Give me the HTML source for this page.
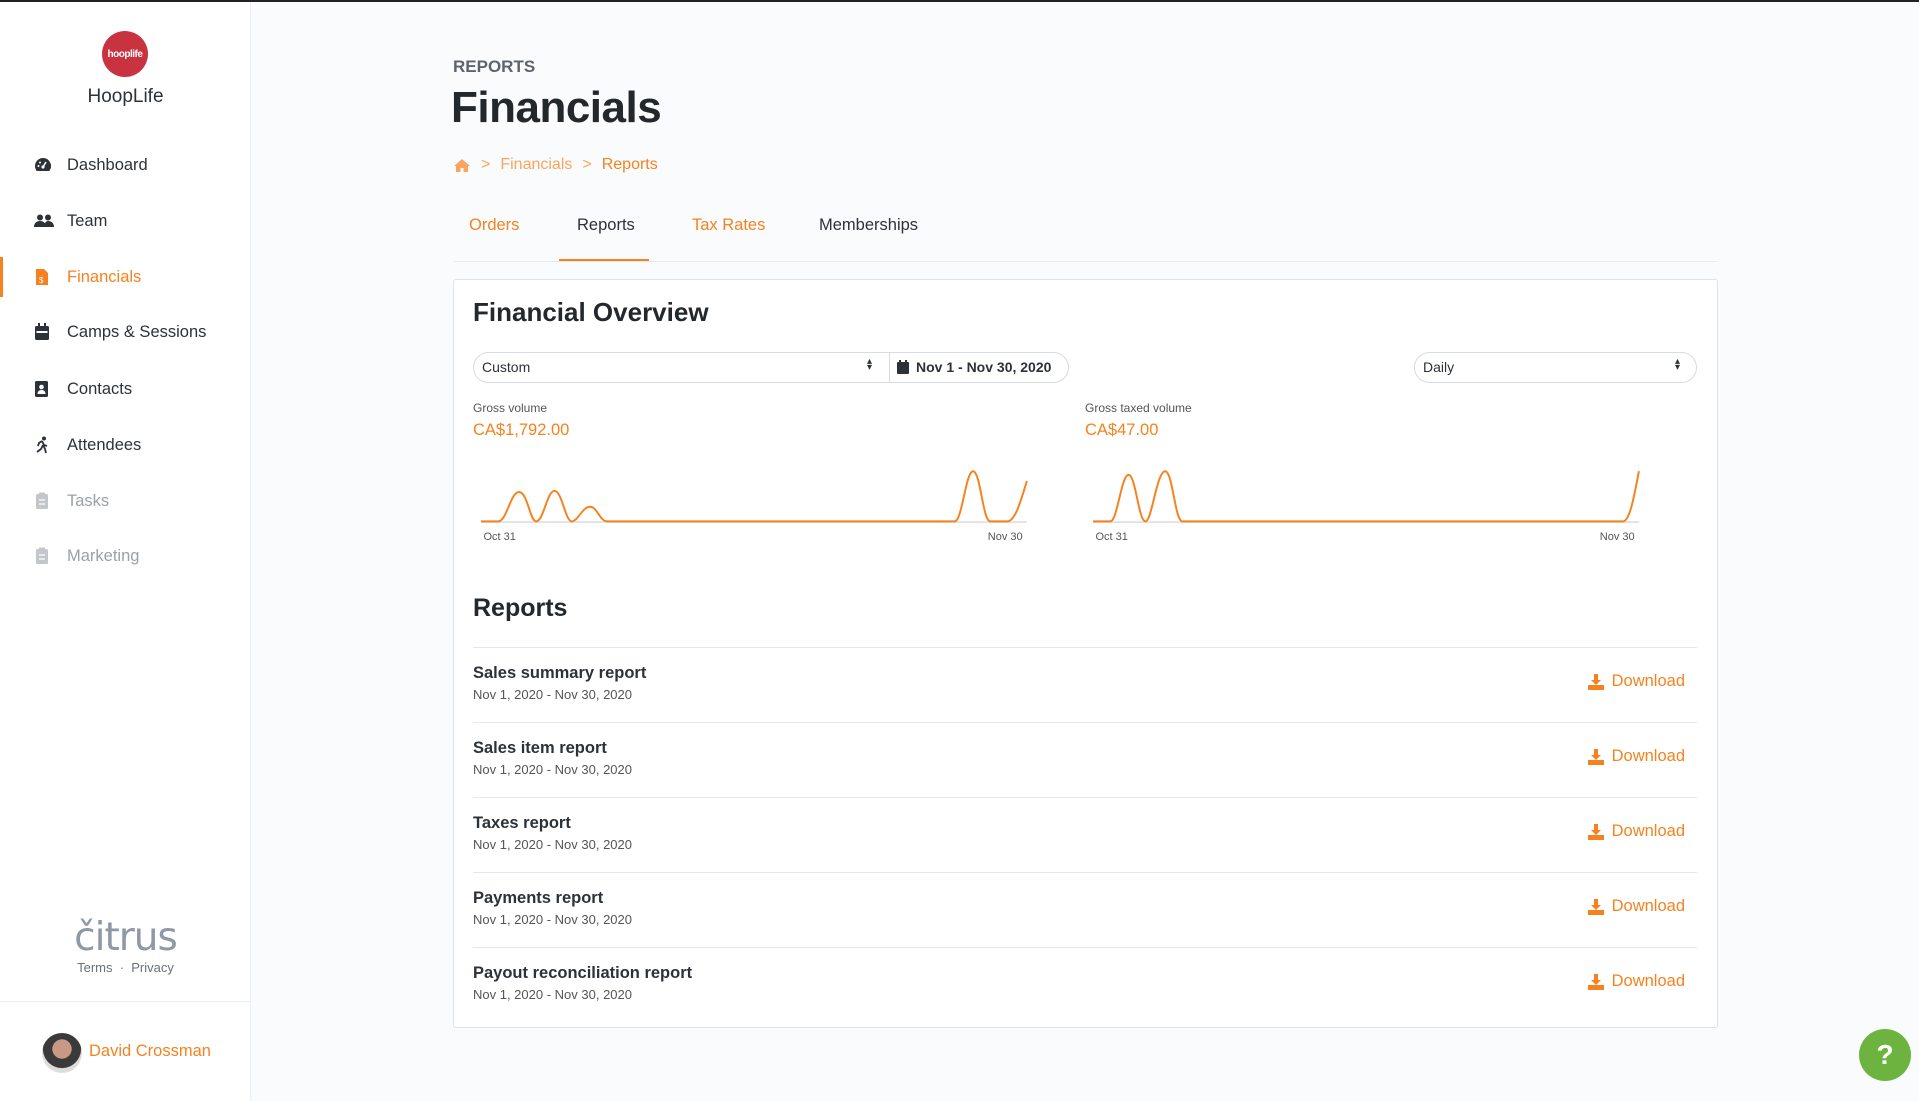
<!DOCTYPE html>
<html><head><meta charset="utf-8"><style>
*{box-sizing:border-box;margin:0;padding:0}
body{width:1919px;height:1099px;overflow:hidden;background:#fafbfd;font-family:"Liberation Sans",sans-serif;color:#2d3238;position:relative;border-top:2px solid #222}
.abs{position:absolute}
.side{position:absolute;left:0;top:0;width:251px;height:1099px;background:#fff;border-right:1px solid #eef0f3}
.nav{position:absolute;left:0;width:251px;height:40px;display:flex;align-items:center;font-size:16.5px;color:#2d3238}
.nav svg{position:absolute;left:34px}
.nav span{position:absolute;left:67px}
.o{color:#f5821f}
.tab{position:absolute;top:214px;font-size:16.5px}
.row{position:absolute;left:473px;width:1224px;height:75px;border-top:1px solid #e4e6e9}
.row b{position:absolute;left:0;top:16px;font-size:16.5px;color:#2d3238}
.row i{position:absolute;left:0;top:39px;font-style:normal;font-size:13px;color:#555}
.row .dl{position:absolute;right:12px;top:24px;font-size:16.5px;color:#f5821f;display:flex;align-items:center;gap:8px}
.lbl{font-size:12px;color:#555}
</style></head><body>
<div class="side">
  <div class="abs" style="left:102px;top:29px;width:46px;height:46px;border-radius:50%;background:#c8333f;color:#fff;font-size:10px;font-weight:bold;display:flex;align-items:center;justify-content:center;letter-spacing:-0.5px">hooplife</div>
  <div class="abs" style="left:0;width:251px;top:84px;text-align:center;font-size:19px">HoopLife</div>

  <div class="nav" style="top:143px"><svg width="18" height="16" viewBox="0 0 18 16"><path d="M9 1a8 8 0 0 0-8 8c0 2 .7 3.7 1.8 5h12.4A8 8 0 0 0 9 1z" fill="#2d3238"/><circle cx="9" cy="10" r="1.6" fill="#fff"/><path d="M9 10 12 5" stroke="#fff" stroke-width="1.5"/><circle cx="4.5" cy="9" r="1" fill="#fff"/><circle cx="6" cy="5.5" r="1" fill="#fff"/></svg><span>Dashboard</span></div>
  <div class="nav" style="top:199px"><svg width="20" height="16" viewBox="0 0 20 16"><circle cx="6" cy="4.5" r="3" fill="#2d3238"/><circle cx="14" cy="4.5" r="3" fill="#2d3238"/><path d="M0 14c0-4 2.5-6 6-6s6 2 6 6zM10 14c.5-4 2-6 4-6 3.5 0 6 2 6 6z" fill="#2d3238"/></svg><span>Team</span></div>
  <div class="abs" style="left:0;top:255px;width:3px;height:40px;background:#f5821f"></div>
  <div class="nav o" style="top:255px"><svg width="16" height="18" viewBox="0 0 16 18"><path d="M2 1h8l4 4v12H2z" fill="#f5821f"/><text x="5" y="15" font-size="8" fill="#fff" font-family="Liberation Sans">$</text></svg><span>Financials</span></div>
  <div class="nav" style="top:310px"><svg width="16" height="18" viewBox="0 0 16 18"><rect x="1" y="3" width="14" height="14" rx="1.5" fill="#2d3238"/><rect x="4" y="0" width="2" height="4" fill="#2d3238"/><rect x="10" y="0" width="2" height="4" fill="#2d3238"/><rect x="2.5" y="8" width="11" height="2" fill="#fff"/></svg><span>Camps &amp; Sessions</span></div>
  <div class="nav" style="top:367px"><svg width="16" height="18" viewBox="0 0 16 18"><rect x="1" y="1" width="13" height="16" rx="1.5" fill="#2d3238"/><circle cx="7.5" cy="7" r="2.3" fill="#fff"/><path d="M3.5 14c0-3 2-4 4-4s4 1 4 4z" fill="#fff"/></svg><span>Contacts</span></div>
  <div class="nav" style="top:423px"><svg width="16" height="18" viewBox="0 0 16 18"><circle cx="10" cy="2.5" r="2" fill="#2d3238"/><path d="M8 5 5 7 4 10M8 5l2 4 3 1M9 9 7 13 3 16M9 9l2 4 1 4" stroke="#2d3238" stroke-width="1.8" fill="none"/></svg><span>Attendees</span></div>
  <div class="nav" style="top:479px;color:#9ba1a8"><svg width="16" height="18" viewBox="0 0 16 18"><rect x="2" y="2" width="12" height="15" rx="1.5" fill="#c3c7cc"/><rect x="5" y="0.5" width="6" height="3" fill="#c3c7cc"/><path d="M5 8h6M5 12h6" stroke="#fff" stroke-width="1.3"/></svg><span>Tasks</span></div>
  <div class="nav" style="top:534px;color:#9ba1a8"><svg width="16" height="18" viewBox="0 0 16 18"><rect x="2" y="2" width="12" height="15" rx="1.5" fill="#c3c7cc"/><rect x="5" y="0.5" width="6" height="3" fill="#c3c7cc"/><path d="M5 8h6M5 12h6" stroke="#fff" stroke-width="1.3"/></svg><span>Marketing</span></div>

  <div class="abs" style="left:0;width:251px;top:913px;text-align:center;font-size:39px;font-family:'DejaVu Sans',sans-serif;color:#8e98a7;letter-spacing:-1px">čitrus</div>
  <div class="abs" style="left:0;width:251px;top:958px;text-align:center;font-size:13px;color:#6a717a">Terms &nbsp;·&nbsp; Privacy</div>
  <div class="abs" style="left:0;top:999px;width:251px;height:1px;background:#e6eef8"></div>
  <div class="abs" style="left:42px;top:1031px;width:40px;height:40px;border-radius:50%;background:radial-gradient(circle at 50% 40%,#c99a83 0 30%,#3a3a3a 32% 60%,#ddd 62%)"></div>
  <div class="abs o" style="left:89px;top:1040px;font-size:16.5px">David Crossman</div>
</div>

<div class="abs" style="left:453px;top:55px;font-size:17px;font-weight:bold;color:#5d646c">REPORTS</div>
<div class="abs" style="left:451px;top:81px;font-size:44px;font-weight:bold;color:#23282d;letter-spacing:-0.5px">Financials</div>
<div class="abs" style="left:453px;top:154px;font-size:16px;display:flex;align-items:center;gap:10px">
  <svg width="18" height="15" viewBox="0 0 18 15"><path d="M9 1 1 8h2v6h4.5V10h3v4H15V8h2z" fill="#f9a560"/></svg>
  <span style="color:#f9a560">&gt;</span><span style="color:#f9a560">Financials</span><span style="color:#f9a560">&gt;</span><span class="o">Reports</span>
</div>
<div class="tab o" style="left:469px">Orders</div>
<div class="tab" style="left:577px">Reports</div>
<div class="tab o" style="left:692px">Tax Rates</div>
<div class="tab" style="left:819px">Memberships</div>
<div class="abs" style="left:453px;top:259px;width:1264px;height:1px;background:#e8eaed"></div>
<div class="abs" style="left:559px;top:257px;width:90px;height:2px;background:#f5821f"></div>

<div class="abs" style="left:453px;top:277px;width:1265px;height:749px;background:#fff;border:1px solid #dfe2e6;border-radius:3px"></div>
<div class="abs" style="left:473px;top:295px;font-size:26px;font-weight:bold;color:#23282d">Financial Overview</div>
<div class="abs" style="left:473px;top:350px;width:596px;height:31px;border:1px solid #d8dbdf;border-radius:16px"></div>
<div class="abs" style="left:889px;top:350px;width:1px;height:31px;background:#d8dbdf"></div>
<div class="abs" style="left:482px;top:357px;font-size:14px">Custom</div>
<div class="abs" style="left:867px;top:357px;font-size:10px;line-height:6px">▴<br>▾</div>
<div class="abs" style="left:897px;top:357px;font-size:14px;font-weight:bold;display:flex;gap:7px;align-items:center"><svg width="12" height="14" viewBox="0 0 12 14"><rect x="0" y="2" width="12" height="12" rx="1" fill="#2d3238"/><rect x="2" y="0" width="2" height="3" fill="#2d3238"/><rect x="8" y="0" width="2" height="3" fill="#2d3238"/></svg>Nov 1 - Nov 30, 2020</div>
<div class="abs" style="left:1414px;top:350px;width:283px;height:31px;border:1px solid #d8dbdf;border-radius:16px"></div>
<div class="abs" style="left:1423px;top:357px;font-size:14px">Daily</div>
<div class="abs" style="left:1675px;top:357px;font-size:10px;line-height:6px">▴<br>▾</div>

<div class="abs lbl" style="left:473px;top:399px">Gross volume</div>
<div class="abs o" style="left:473px;top:419px;font-size:16.5px">CA$1,792.00</div>
<div class="abs lbl" style="left:1085px;top:399px">Gross taxed volume</div>
<div class="abs o" style="left:1085px;top:419px;font-size:16.5px">CA$47.00</div>

<svg class="abs" style="left:0;top:-2px" width="1919" height="1099" viewBox="0 0 1567.8 897.9">
  <line x1="393" y1="426.5" x2="839" y2="426.5" stroke="#e2e2e2" stroke-width="1.5"/>
  <line x1="893" y1="426.5" x2="1339" y2="426.5" stroke="#e2e2e2" stroke-width="1.5"/>
  <path d="M393 426 L407 426 C414 426 417 402 424 402 C431 402 433 426 438 426 C444 426 447 401 453 401 C459 401 462 426 467 426 C472 426 476 414 482 414 C488 414 490 426 496 426 L780 426 C786 426 789 385 795 385 C801 385 803 426 809 426 L823 426 C830 426 835 405 839 393" fill="none" stroke="#f5821f" stroke-width="1.6"/>
  <path d="M893 426 L907 426 C913 426 916 388 922 388 C928 388 930 426 936 426 C941 426 945 385 952 385 C958 385 960 426 966 426 L1326 426 C1332 426 1336 400 1339 385" fill="none" stroke="#f5821f" stroke-width="1.6"/>
  <text x="395" y="441" font-size="9" fill="#555" font-family="Liberation Sans">Oct 31</text>
  <text x="807" y="441" font-size="9" fill="#555" font-family="Liberation Sans">Nov 30</text>
  <text x="895" y="441" font-size="9" fill="#555" font-family="Liberation Sans">Oct 31</text>
  <text x="1307" y="441" font-size="9" fill="#555" font-family="Liberation Sans">Nov 30</text>
</svg>

<div class="abs" style="left:473px;top:592px;font-size:25px;font-weight:bold;color:#23282d">Reports</div>

<div class="row" style="top:645px"><b>Sales summary report</b><i>Nov 1, 2020 - Nov 30, 2020</i><div class="dl"><svg width="16" height="16" viewBox="0 0 16 16"><path d="M6 0h4v6h3l-5 5-5-5h3z" fill="#f5821f"/><rect x="0" y="11" width="16" height="5" fill="#f5821f"/></svg>Download</div></div>
<div class="row" style="top:720px"><b>Sales item report</b><i>Nov 1, 2020 - Nov 30, 2020</i><div class="dl"><svg width="16" height="16" viewBox="0 0 16 16"><path d="M6 0h4v6h3l-5 5-5-5h3z" fill="#f5821f"/><rect x="0" y="11" width="16" height="5" fill="#f5821f"/></svg>Download</div></div>
<div class="row" style="top:795px"><b>Taxes report</b><i>Nov 1, 2020 - Nov 30, 2020</i><div class="dl"><svg width="16" height="16" viewBox="0 0 16 16"><path d="M6 0h4v6h3l-5 5-5-5h3z" fill="#f5821f"/><rect x="0" y="11" width="16" height="5" fill="#f5821f"/></svg>Download</div></div>
<div class="row" style="top:870px"><b>Payments report</b><i>Nov 1, 2020 - Nov 30, 2020</i><div class="dl"><svg width="16" height="16" viewBox="0 0 16 16"><path d="M6 0h4v6h3l-5 5-5-5h3z" fill="#f5821f"/><rect x="0" y="11" width="16" height="5" fill="#f5821f"/></svg>Download</div></div>
<div class="row" style="top:945px"><b>Payout reconciliation report</b><i>Nov 1, 2020 - Nov 30, 2020</i><div class="dl"><svg width="16" height="16" viewBox="0 0 16 16"><path d="M6 0h4v6h3l-5 5-5-5h3z" fill="#f5821f"/><rect x="0" y="11" width="16" height="5" fill="#f5821f"/></svg>Download</div></div>

<div class="abs" style="left:1859px;top:1027px;width:52px;height:52px;border-radius:50%;background:#6cb33f;color:#fff;font-size:28px;font-weight:bold;display:flex;align-items:center;justify-content:center">?</div>
</body></html>
